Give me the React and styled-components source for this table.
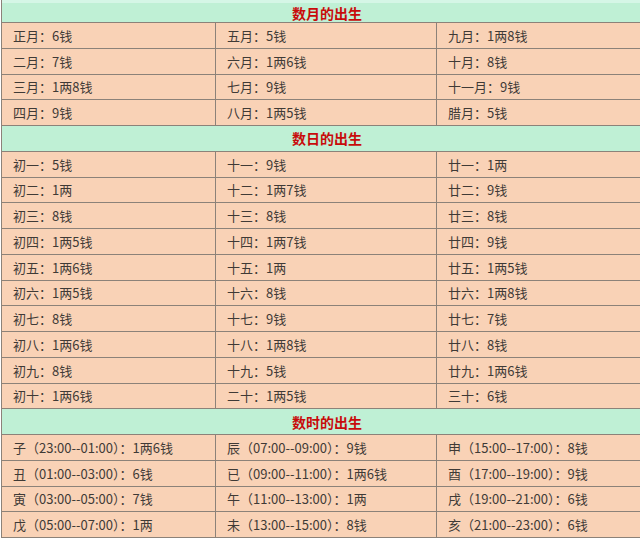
import React from 'react'
import styled, { createGlobalStyle } from 'styled-components'

const GlobalStyle = createGlobalStyle`
  html, body {
    margin: 0;
    padding: 0;
    background: #ffffff;
    overflow: hidden;
  }
  body {
    font-family: "Noto Sans CJK SC", "Noto Sans", sans-serif;
  }
`

const Table = styled.div`
  display: grid;
  grid-template-columns: 214px 221px 215px;
  width: 650px;
  margin-left: 1px;
  border-left: 1px solid #8c8279;
`

const HeaderCell = styled.div`
  grid-column: 1 / -1;
  box-sizing: border-box;
  height: ${({ $first }) => ($first ? '23px' : '25.75px')};
  ${({ $first }) => $first && 'border-top: 3px solid #d5f6e6;'}
  background: #bff0d5;
  border-bottom: 1px solid #8c8279;
  display: flex;
  align-items: center;
  justify-content: center;
  color: #c80b0b;
  font-size: 14px;
  font-weight: bold;
  letter-spacing: 0;
`

const Cell = styled.div`
  box-sizing: border-box;
  height: 25.75px;
  background: #f9d2b6;
  border-right: 1px solid #8c8279;
  border-bottom: 1px solid #8c8279;
  display: flex;
  align-items: center;
  padding-left: 11px;
  color: #3f3a36;
  font-size: 13px;
  white-space: nowrap;
`

const sections = [
  {
    title: '数月的出生',
    rows: [
      ['正月：6钱', '五月：5钱', '九月：1两8钱'],
      ['二月：7钱', '六月：1两6钱', '十月：8钱'],
      ['三月：1两8钱', '七月：9钱', '十一月：9钱'],
      ['四月：9钱', '八月：1两5钱', '腊月：5钱'],
    ],
  },
  {
    title: '数日的出生',
    rows: [
      ['初一：5钱', '十一：9钱', '廿一：1两'],
      ['初二：1两', '十二：1两7钱', '廿二：9钱'],
      ['初三：8钱', '十三：8钱', '廿三：8钱'],
      ['初四：1两5钱', '十四：1两7钱', '廿四：9钱'],
      ['初五：1两6钱', '十五：1两', '廿五：1两5钱'],
      ['初六：1两5钱', '十六：8钱', '廿六：1两8钱'],
      ['初七：8钱', '十七：9钱', '廿七：7钱'],
      ['初八：1两6钱', '十八：1两8钱', '廿八：8钱'],
      ['初九：8钱', '十九：5钱', '廿九：1两6钱'],
      ['初十：1两6钱', '二十：1两5钱', '三十：6钱'],
    ],
  },
  {
    title: '数时的出生',
    rows: [
      ['子（23:00--01:00）：1两6钱', '辰（07:00--09:00）：9钱', '申（15:00--17:00）：8钱'],
      ['丑（01:00--03:00）：6钱', '已（09:00--11:00）：1两6钱', '酉（17:00--19:00）：9钱'],
      ['寅（03:00--05:00）：7钱', '午（11:00--13:00）：1两', '戌（19:00--21:00）：6钱'],
      ['戊（05:00--07:00）：1两', '未（13:00--15:00）：8钱', '亥（21:00--23:00）：6钱'],
    ],
  },
]

export default function App() {
  return (
    <>
      <GlobalStyle />
      <Table>
        {sections.map((section, i) => (
          <React.Fragment key={section.title}>
            <HeaderCell $first={i === 0}>{section.title}</HeaderCell>
            {section.rows.map((row) =>
              row.map((text) => <Cell key={text}>{text}</Cell>)
            )}
          </React.Fragment>
        ))}
      </Table>
    </>
  )
}
